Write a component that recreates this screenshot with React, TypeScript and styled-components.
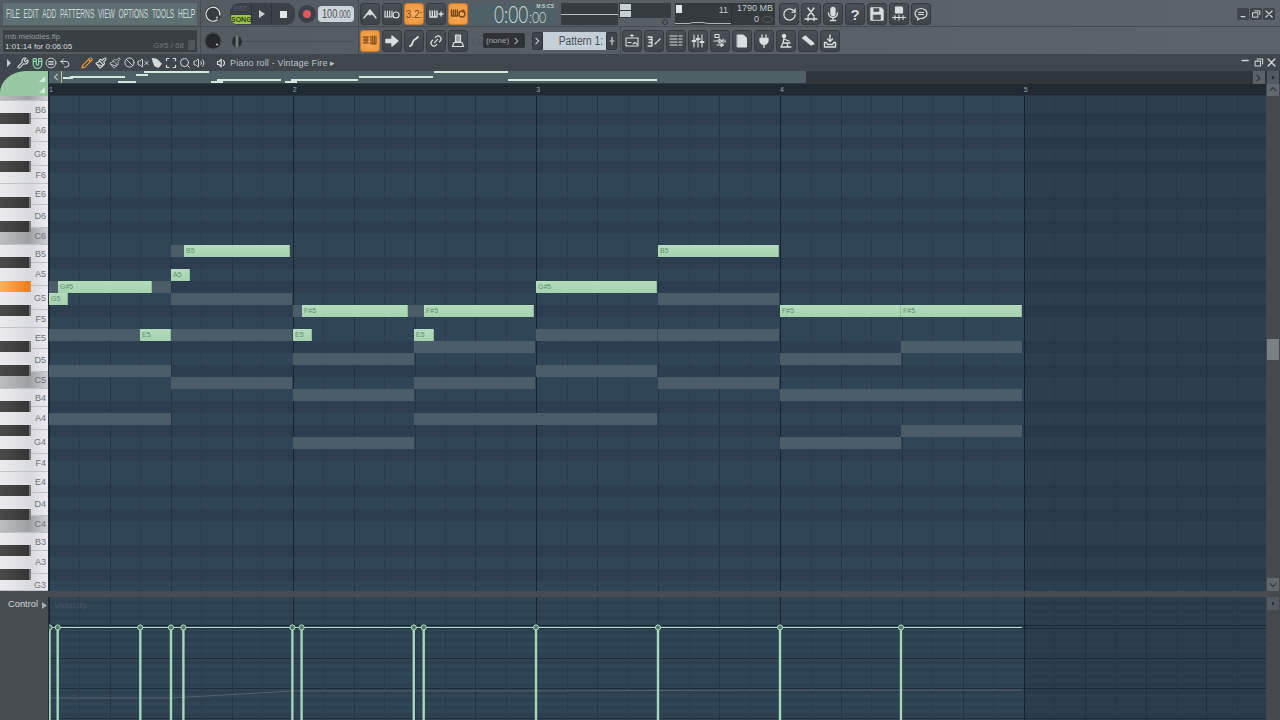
import React from 'react';
import styled, { createGlobalStyle, css } from 'styled-components';
import { RotateCw, Wrench, Magnet, Undo2, Pencil, Paintbrush, Ban, VolumeX, Search, Volume2, Link2 } from 'lucide-react';

const GlobalStyle = createGlobalStyle`
  html, body { margin: 0; padding: 0; background: #3f464c; }
  * { box-sizing: border-box; }
  #root { width: 1280px; height: 720px; overflow: hidden; font-family: "Liberation Sans", Arial, sans-serif; }
`;

const STEP = 30.46;
const BAR = STEP * 8;
const ROW = 12;

const verticalLines = css`
  repeating-linear-gradient(90deg, #17252f 0 1px, transparent 1px ${BAR}px),
  repeating-linear-gradient(90deg, #243543 0 1px, transparent 1px ${STEP * 2}px),
  repeating-linear-gradient(90deg, #2b3d4c 0 1px, transparent 1px ${STEP}px)
`;

const Page = styled.div`
  width: 1280px;
  height: 720px;
  display: flex;
  flex-direction: column;
  background: #3f464c;
  overflow: hidden;
`;

const Header = styled.header`
  height: 54px;
  background: linear-gradient(90deg, #545b60, #5c6369);
`;

const TopRow = styled.div<{ $line?: boolean }>`
  height: 27px;
  display: flex;
  align-items: flex-start;
  padding: 3px 0 0 3px;
  ${p => p.$line && 'border-bottom: 1px solid #474c51;'}
`;

const Menu = styled.nav`
  width: 194px;
  height: 22px;
  background: #5f7073;
  flex: none;
`;

const MenuInner = styled.div`
  width: 357px;
  height: 22px;
  margin-left: 3px;
  display: flex;
  justify-content: space-between;
  transform: scaleX(0.53);
  transform-origin: left center;
`;

const MenuItem = styled.span`
  font-size: 12.5px;
  line-height: 22px;
  color: #cbd8d8;
  white-space: nowrap;
`;

const Sep = styled.div<{ $ml: number }>`
  width: 1px;
  height: 27px;
  margin: -3px 0 0 ${p => p.$ml}px;
  background: #474c51;
  flex: none;
`;

const KnobWrap = styled.div`
  margin-left: 3px;
  width: 18px;
  height: 22px;
  flex: none;
  display: flex;
  align-items: center;
`;

const Transport = styled.div`
  margin-left: 8px;
  width: 65px;
  height: 22px;
  border-radius: 9px;
  background: #3b4146;
  display: flex;
  flex: none;
  overflow: hidden;
`;

const PatSong = styled.div`
  width: 22px;
  display: flex;
  flex-direction: column;
  align-items: center;
  border-right: 1px solid #2f3439;
`;

const PatLabel = styled.span`
  font-size: 7px;
  line-height: 12px;
  color: #596067;
`;

const SongLabel = styled.span`
  width: 20px;
  margin-left: 1px;
  height: 9px;
  background: #9cc24a;
  color: #2f4413;
  font-size: 7px;
  font-weight: bold;
  line-height: 9px;
  text-align: center;
  border-radius: 1px;
`;

const TransportKey = styled.div<{ $w: number }>`
  width: ${p => p.$w}px;
  display: flex;
  align-items: center;
  justify-content: center;
  border-right: 1px solid #2f3439;
  &:last-child { border-right: 0; }
`;

const RecordKey = styled.div`
  margin-left: 3px;
  width: 18px;
  height: 18px;
  margin-top: 2px;
  border-radius: 50%;
  background: #3b4146;
  display: flex;
  align-items: center;
  justify-content: center;
  flex: none;
  &::after {
    content: '';
    width: 8px;
    height: 8px;
    border-radius: 50%;
    background: #dc5a58;
  }
`;

const Tempo = styled.div`
  margin: 3px 0 0 2px;
  width: 36px;
  height: 16px;
  border-radius: 4px;
  background: #ccd4d9;
  padding-left: 4px;
  flex: none;
`;

const TempoText = styled.div`
  width: 44px;
  color: #4a5156;
  font-size: 13.5px;
  line-height: 16px;
  white-space: nowrap;
  transform: scaleX(0.68);
  transform-origin: left center;
  small { font-size: 10px; }
`;

const Group = styled.div<{ $ml: number }>`
  margin-left: ${p => p.$ml}px;
  display: flex;
  gap: 2px;
  flex: none;
`;

const ToolBtn = styled.div<{ $on?: boolean }>`
  width: 20px;
  height: 22px;
  border-radius: 3px;
  border: 1px solid ${p => (p.$on ? '#c77a2e' : '#363b40')};
  background: ${p => (p.$on ? 'radial-gradient(circle, #f8b061, #ee9232)' : 'linear-gradient(#494f54, #3e4449)')};
  color: ${p => (p.$on ? '#7a4613' : '#d9dee0')};
  display: flex;
  align-items: center;
  justify-content: center;
  font-size: 10px;
  flex: none;
  svg { display: block; }
`;

const TimePanel = styled.div`
  margin-left: 3px;
  width: 86px;
  height: 22px;
  background: #4e6166;
  position: relative;
  padding-left: 23px;
  flex: none;
`;

const TimeInner = styled.div`
  width: 76px;
  height: 20px;
  display: flex;
  align-items: flex-end;
  color: #cfdada;
  font-family: Lato, "Liberation Sans", sans-serif;
  font-weight: 300;
  transform: scaleX(0.75);
  transform-origin: left bottom;
`;

const TimeBig = styled.span`
  font-size: 23px;
  line-height: 18px;
`;

const TimeSmall = styled.span`
  font-size: 16.5px;
  line-height: 12px;
  margin-left: 1px;
`;

const TimeUnit = styled.span`
  position: absolute;
  top: 0;
  right: 3px;
  font-size: 5px;
  font-weight: 700;
  line-height: 6px;
  color: #c3cfcf;
`;

const DarkPanel = styled.div`
  margin-left: 4px;
  width: 57px;
  height: 22px;
  background: #373c41;
  display: flex;
  align-items: center;
  flex: none;
  &::after {
    content: '';
    display: block;
    width: 100%;
    height: 1px;
    background: #b9c0c4;
  }
`;

const MeterPanel = styled.div`
  margin-left: 1px;
  width: 52px;
  height: 22px;
  flex: none;
  display: flex;
  flex-direction: column;
  align-items: flex-end;
`;

const MeterBars = styled.div`
  width: 100%;
  height: 15px;
  background: #373c41;
  padding: 1px;
  display: flex;
  flex-direction: column;
  gap: 1px;
`;

const MeterBar = styled.div`
  width: 11px;
  height: 6px;
  background: #c9d0d4;
`;

const MeterDot = styled.div`
  width: 6px;
  height: 6px;
  margin: 1px 3px 0 0;
  border: 1px solid #30353a;
  border-radius: 50%;
`;

const CpuPanel = styled.div`
  margin-left: 4px;
  width: 100px;
  height: 22px;
  background: #353a3f;
  display: grid;
  grid-template-columns: 57px 43px;
  flex: none;
  color: #c5cbce;
  font-size: 9px;
`;

const CpuLeft = styled.div`
  position: relative;
  padding: 0 3px 0 0;
  text-align: right;
  line-height: 15px;
  border-right: 1px solid #2c3034;
`;

const CpuBlock = styled.div`
  position: absolute;
  left: 1px;
  top: 2px;
  width: 6px;
  height: 8px;
  background: #e2e6e8;
`;

const CpuWave = styled.svg`
  position: absolute;
  left: 0;
  bottom: 0;
`;

const CpuRight = styled.div`
  display: flex;
  flex-direction: column;
  align-items: flex-end;
  padding-right: 2px;
  line-height: 11px;
  white-space: nowrap;
`;

const CpuZero = styled.div`
  display: flex;
  align-items: center;
  gap: 3px;
  &::after {
    content: '';
    width: 9px;
    height: 5px;
    border: 1px solid #565c61;
    border-radius: 50%;
  }
`;

const WinBtns = styled.div`
  margin: 5px 5px 0 auto;
  display: flex;
  gap: 1px;
`;

const WinBtn = styled.div`
  width: 12px;
  height: 12px;
  border-radius: 2px;
  background: #3f454a;
  color: #d4d9db;
  display: flex;
  align-items: center;
  justify-content: center;
`;

const InfoPanel = styled.div`
  width: 194px;
  height: 22px;
  background: #3a3f44;
  padding: 2px 2px;
  position: relative;
  font-size: 7.8px;
  line-height: 9.5px;
  color: #989ea2;
  flex: none;
`;

const InfoTime = styled.div`
  color: #d8dcdf;
  font-size: 8px;
  line-height: 10px;
`;

const InfoNote = styled.span`
  position: absolute;
  right: 13px;
  bottom: 1px;
  color: #71777b;
  font-size: 8px;
  line-height: 10px;
`;

const InfoStamp = styled.span`
  position: absolute;
  right: 2px;
  bottom: 2px;
  width: 7px;
  height: 10px;
  background: #50565b;
  border-radius: 2px 2px 0 0;
`;

const SliderTrack = styled.div`
  margin: 0 0 0 6px;
  width: 126px;
  height: 22px;
  flex: none;
  display: flex;
  align-items: center;
  padding-left: 4px;
  &::after {
    content: '';
    flex: 1;
    height: 1px;
    background: #4a5055;
  }
`;

const SliderKnob = styled.div`
  width: 10px;
  height: 11px;
  border-radius: 50%;
  background: linear-gradient(90deg, #2c3034 30%, #8d9397 50%, #2c3034 70%);
`;

const FaintDot = styled.div`
  margin: 8px 0 0 4px;
  width: 8px;
  height: 8px;
  border-radius: 50%;
  border: 1px solid #4f555a;
  flex: none;
`;

const Dropdown = styled.div`
  margin: 3px 0 0 3px;
  width: 42px;
  height: 15px;
  background: #2f3337;
  border-radius: 2px;
  color: #a4a9ad;
  font-size: 8px;
  line-height: 15px;
  padding: 0 4px 0 3px;
  flex: none;
  display: flex;
  justify-content: space-between;
  align-items: center;
`;

const PatternArrow = styled.div<{ $ml?: number }>`
  margin: 2px 0 0 ${p => p.$ml ?? 0}px;
  width: 11px;
  height: 18px;
  background: #3e4449;
  border: 1px solid #33383d;
  border-radius: 2px;
  color: #c8cdd0;
  display: flex;
  align-items: center;
  justify-content: center;
  flex: none;
`;

const PatternName = styled.div`
  margin-top: 2px;
  width: 63px;
  height: 18px;
  background: #c4cfd7;
  flex: none;
  display: flex;
  justify-content: flex-end;
  padding-right: 3px;
`;

const PatternText = styled.span`
  color: #4a5258;
  font-size: 12px;
  line-height: 18px;
  white-space: nowrap;
  transform: scaleX(0.85);
  transform-origin: right center;
`;

const RollBar = styled.div`
  height: 17px;
  background: #3f464c;
  display: flex;
  align-items: center;
  color: #c6cbce;
  flex: none;
`;

const RollTool = styled.div<{ $ml?: number; $c?: string }>`
  width: 14px;
  margin-left: ${p => p.$ml ?? 0}px;
  display: flex;
  justify-content: center;
  color: ${p => p.$c ?? '#d5dadc'};
  flex: none;
`;

const RollTitle = styled.span`
  margin-left: 1px;
  font-size: 9px;
  letter-spacing: 0.15px;
  color: #bcc3c8;
`;

const RollWin = styled.div`
  margin: 0 3px 0 auto;
  display: flex;
  gap: 2px;
  color: #d2d6d9;
`;

const RollBody = styled.div`
  flex: 1;
  display: grid;
  grid-template-columns: 49px 1217px 14px;
  grid-template-rows: 13px 12px 495px 6px 123px;
`;

const Corner = styled.div`
  grid-column: 1;
  grid-row: 1 / 3;
  background: #98c8a2;
  border-top-left-radius: 26px 22px;
  position: relative;
  border-right: 1px solid #23303a;
`;

const CornerMark = styled.div<{ $top: number }>`
  position: absolute;
  right: 3px;
  top: ${p => p.$top}px;
  width: 0;
  height: 0;
  border-left: 6px solid transparent;
  border-bottom: 6px solid #d8eadb;
`;

const Overview = styled.div`
  grid-column: 2;
  grid-row: 1;
  background: #2f363c;
  position: relative;
`;

const OverviewActive = styled.div`
  width: 757px;
  height: 100%;
  background: #4e5f66;
  position: relative;
  border-bottom: 1px solid #333a40;
  display: flex;
  align-items: center;
  padding-left: 4px;
  color: #b8c0c4;
`;

const OverviewNote = styled.div`
  position: absolute;
  height: 2px;
  background: #d5e6de;
`;

const Playhead = styled.div`
  position: absolute;
  left: 12px;
  top: 0;
  bottom: 0;
  width: 1px;
  background: #c9c48a;
`;

const TopRight = styled.div`
  grid-column: 3;
  grid-row: 1;
  background: #2f363c;
  display: flex;
  justify-content: center;
  align-items: center;
`;

const OverviewEnd = styled.div`
  position: absolute;
  right: 1px;
  top: 0;
  width: 12px;
  height: 13px;
  background: #596066;
  color: #2f3439;
  display: flex;
  align-items: center;
  justify-content: center;
`;

const DotBtn = styled.div`
  width: 12px;
  height: 13px;
  background: #52595f;
  display: flex;
  align-items: center;
  justify-content: center;
  &::after { content: ''; width: 2px; height: 3px; background: #2b3034; }
`;

const Ruler = styled.div`
  grid-column: 2;
  grid-row: 2;
  background: #1f2a33;
  display: flex;
  border-bottom: 1px solid #253746;
`;

const RulerBar = styled.div`
  flex: 0 0 ${BAR}px;
  font-size: 7px;
  line-height: 12px;
  color: #9ca6ad;
`;

const ScrollBtn = styled.div<{ $h?: number }>`
  width: 12px;
  margin-left: 1px;
  height: ${p => p.$h ?? 13}px;
  background: #62686d;
  color: #31363a;
  display: flex;
  align-items: center;
  justify-content: center;
  flex: none;
`;

const RulerCap = styled.div`
  grid-column: 3;
  grid-row: 2;
  background: #45494d;
`;

const Keys = styled.div`
  grid-column: 1;
  grid-row: 3;
  position: relative;
  overflow: hidden;
  display: flex;
  flex-direction: column;
  border-right: 1px solid #1f2e38;
`;

const WhiteKey = styled.div<{ $h: number; $c?: boolean; $cut?: boolean }>`
  flex: 0 0 ${p => p.$h}px;
  border-bottom: 1px solid #bfc2c7;
  background: ${p => (p.$c ? 'linear-gradient(90deg, #bcbec1, #9ea0a3 60%, #cfd0d3)' : 'linear-gradient(90deg, #ececf0, #d8d9de 65%, #ebebef)')};
  color: #6f7377;
  font-size: 9px;
  line-height: 10px;
  display: flex;
  align-items: ${p => (p.$cut ? 'flex-end' : 'center')};
  justify-content: flex-end;
  padding-right: 2px;
`;

const BlackKey = styled.div<{ $hot?: boolean }>`
  position: absolute;
  left: 0;
  width: 31px;
  height: 11px;
  border-right: 2px solid ${p => (p.$hot ? '#ee8a2e' : '#77797b')};
  background: ${p => (p.$hot ? 'linear-gradient(90deg, #fcb25c, #f07c16)' : 'linear-gradient(90deg, #4a4a4a, #363636)')};
`;

const Grid = styled.div`
  grid-column: 2;
  grid-row: 3;
  position: relative;
  overflow: hidden;
  background-image: ${verticalLines},
    repeating-linear-gradient(180deg,
      #304556 0 17px, #2c3e4f 17px 29px,
      #304556 29px 41px, #2c3e4f 41px 53px,
      #304556 53px 65px, #2c3e4f 65px 77px,
      #304556 77px 101px, #2c3e4f 101px 113px,
      #304556 113px 125px, #2c3e4f 125px 137px,
      #304556 137px 144px);
`;

// dims the part of the roll after the last bar of the pattern
const PastEnd = styled.div`
  position: absolute;
  left: 975px;
  top: 0;
  right: 0;
  bottom: 0;
  background: rgba(20, 30, 42, 0.14);
`;

const Note = styled.div<{ $ghost?: boolean }>`
  position: absolute;
  height: 11.5px;
  font-size: 7px;
  line-height: 11px;
  padding-left: 2px;
  overflow: hidden;
  white-space: nowrap;
  ${p =>
    p.$ghost
      ? 'background: #4c5d6a;'
      : `background: linear-gradient(#b5dcbd, #a4d2ae);
         color: #5c9070;
         border-right: 1px solid #8fbd9b;`}
`;

const ScrollCol = styled.div`
  grid-column: 3;
  grid-row: 3;
  background: #45494d;
  display: flex;
  flex-direction: column;
  justify-content: flex-end;
  position: relative;
`;

const ScrollThumb = styled.div`
  position: absolute;
  left: 1px;
  top: 243px;
  width: 12px;
  height: 21px;
  background: #7b8084;
`;

const Splitter = styled.div`
  grid-column: 1 / 3;
  grid-row: 4;
  background: #464c51;
`;

const SplitCap = styled.div`
  grid-column: 3;
  grid-row: 4;
  background: #45494d;
`;

const ControlSide = styled.div`
  grid-column: 1;
  grid-row: 5;
  background: #474d51;
  border-right: 1px solid #1f2e38;
  padding: 2px 0 0 8px;
  display: flex;
  gap: 4px;
  align-items: flex-start;
`;

const ControlText = styled.span`
  color: #d3d7d9;
  font-size: 9.3px;
  line-height: 11px;
`;

const ControlArrow = styled.svg`
  margin-top: 3px;
  color: #a8aeb2;
`;

const VelPane = styled.div`
  grid-column: 2;
  grid-row: 5;
  position: relative;
  background-image: ${verticalLines},
    repeating-linear-gradient(180deg, #1d2c39 0 1px, transparent 1px 30px),
    repeating-linear-gradient(180deg, #304556 0 4px, #2d4050 4px 7.5px);
  background-position: 0 0, 0 0, 0 0, 0 31px, 0 0;
`;

const VelLabel = styled.span`
  position: absolute;
  left: 5px;
  top: 2px;
  font-size: 9.5px;
  line-height: 11px;
  color: #415362;
`;

const VelSvg = styled.svg`
  position: absolute;
  left: 0;
  top: 0;
`;

const VelCap = styled.div`
  grid-column: 3;
  grid-row: 5;
  background: #45494d;
`;

const Glyph: React.FC<{ size?: number; sw?: number; children: React.ReactNode }> = ({ size = 16, sw = 1.4, children }) => (
  <svg width={size} height={size} viewBox="0 0 16 16" fill="none" stroke="currentColor" strokeWidth={sw} strokeLinecap="round" strokeLinejoin="round">
    {children}
  </svg>
);

const Tri: React.FC<{ dir?: 'left' | 'right' | 'up' | 'down' }> = ({ dir = 'right' }) => {
  const d = {
    right: 'M2 1l4 4-4 4',
    left: 'M6 1 2 5l4 4',
    up: 'M1 6l4-4 4 4',
    down: 'M1 3l4 4 4-4',
  }[dir];
  return (
    <svg width="8" height="8" viewBox="0 0 10 10" fill="none" stroke="currentColor" strokeWidth="1.4">
      <path d={d} />
    </svg>
  );
};

const Knob: React.FC<{ dark?: boolean }> = ({ dark }) => (
  <svg width="18" height="18" viewBox="0 0 18 18">
    <circle cx="9" cy="9" r="8.4" fill={dark ? '#25292d' : '#373c41'} />
    {dark ? (
      <circle cx="9" cy="9" r="8" fill="none" stroke="#4d5358" strokeWidth="1" />
    ) : (
      <path d="M13.5 14.5A7 7 0 1 1 15.8 10.5" fill="none" stroke="#dfe4e6" strokeWidth="1.2" />
    )}
    <circle cx="13" cy="12.5" r="0.9" fill="#d7dcde" />
  </svg>
);

const row1Left = [
  <Glyph key="a"><path d="M2 12 8 4l6 8M8 4v5M4 9l4-2 4 2" /></Glyph>,
  <Glyph key="b" sw={1.2}><path d="M1 5v6h7V5M3.4 5v6M5.7 5v6" /><circle cx="12" cy="9" r="3" /></Glyph>,
  null,
  <Glyph key="d"><path d="M2 5v6h7V5M4.3 5v6M6.7 5v6M11 8h4M13 6v4" /></Glyph>,
  <Glyph key="e"><path d="M1.5 4v6h6V4M3.5 4v6M5.5 4v6" /><circle cx="12" cy="8" r="3" /><path d="m13 4 1 1-1 1" /></Glyph>,
];

const row1Right = [
  <RotateCw key="a" size={15} strokeWidth={2} />,
  <Glyph key="b"><path d="M5 2l6 8M11 2l-6 8M2 13h12M5 11.5v3M11 11.5v3" /></Glyph>,
  <Glyph key="c"><rect x="6" y="1.5" width="4" height="8" rx="2" fill="currentColor" /><path d="M3.5 7a4.5 4.5 0 0 0 9 0M8 11.5v3M5.5 14.5h5" /></Glyph>,
  <span key="d" style={{ fontSize: 15, fontWeight: 700 }}>?</span>,
  <Glyph key="e"><path d="M2 2h10l2 2v10H2z" fill="currentColor" /><path d="M5 2.5h5v3H5zM4.5 9h7v4.500h-7z" stroke="#4a5056" fill="#4a5056" strokeWidth="0.6" /></Glyph>,
  <Glyph key="f" sw={1.1}><path d="M4.500 1h6l1 1v5h-7z" fill="currentColor" /><path d="M1.500 11.500h13M4 9.500v4M8 9v5M12 9.500v4" /></Glyph>,
  <Glyph key="g" sw={1.2}><path d="M8 2.500c3.300 0 6 2.200 6 5s-2.700 5-6 5l-1 0-2.500 1.500.4-2.200C3 10.900 2 9.300 2 7.500c0-2.800 2.700-5 6-5z" /><path d="M5.500 6.500h5M5.500 8.500h5" /></Glyph>,
];

const row2Left = [
  <Glyph key="a" sw={1.1}><path d="M1 4h6M1 7h6M1 10h6M3 4v6M5 4v6" /><path d="M9 3v8h5V3M10.700 3v8M12.400 3v8" /></Glyph>,
  <Glyph key="b"><path d="M2 6.500h6V3l6 5-6 5V9.500H2z" fill="currentColor" /></Glyph>,
  <Glyph key="c" sw={1.8}><path d="M4 13c3 0 2-5 4-6s2-1 4-3" /></Glyph>,
  <Link2 key="d" size={14} strokeWidth={2} style={{ transform: 'rotate(-45deg)' }} />,
  <Glyph key="e" sw={1.2}><path d="M5.500 2h5v7h-5zM4 9.500h8l1.500 4h-11zM7 2v7M9 2v7" /></Glyph>,
];

const row2Right = [
  <Glyph key="a" sw={1.1}><path d="M2 5h12v8H2zM8 1.500v2M6.500 2.500h3M4 9.500h3M9 11l2-1.500 2 1.500" /></Glyph>,
  <Glyph key="b" sw={1.3}><path d="M2 4h4v2.500H3M6 6.500v3H3M6 9.500V13H2" /><path d="M9 11l2-2M12 8l2-2" /></Glyph>,
  <Glyph key="c" sw={1.1}><path d="M2 3h7M2 6h7M2 9h7M2 12h7M11 3h3M11 6h3M11 9h3M11 12h3" /></Glyph>,
  <Glyph key="d" sw={1.1}><path d="M4 2v12M8 2v12M12 2v12" /><path d="M2.500 8h3M6.500 6h3M10.500 9h3" strokeWidth="2" /></Glyph>,
  <Glyph key="e" sw={1.1}><path d="M3 1.500h4v3H3zM2 8h5M7 6v4l3-2zM11 6v4M13 7v2M5 12h4M9 10.500v3l2.500-1.500z" /></Glyph>,
  <Glyph key="f" sw={1}><path d="M3.500 2h6l3 3v9h-9z" fill="currentColor" /></Glyph>,
  <Glyph key="g" sw={1.3}><path d="M4 5.500h8v3l-2 2.500H6L4 8.500z" fill="currentColor" /><path d="M6 2v3.500M10 2v3.500M8 11v3.500" /></Glyph>,
  <Glyph key="h" sw={1.3}><circle cx="6" cy="3" r="1.600" fill="currentColor" /><path d="M6 5l-1 5h7M5 10l-2 4M9 10l1 4M3 14h10M6 6l5 2" /></Glyph>,
  <Glyph key="i" sw={1.2}><path d="M2.500 5l3-2 3 3 4 3 1.500 2-3 1-3.500-3z" fill="currentColor" /></Glyph>,
  <Glyph key="j" sw={1.4}><path d="M8 2v6M5.500 6 8 8.500 10.500 6M2.500 9.500h2l1 2h5l1-2h2V14h-11z" /></Glyph>,
];

const rollTools: { node: React.ReactNode; ml?: number; c?: string }[] = [
  { node: <Wrench size={12} strokeWidth={2.2} /> },
  { node: <Magnet size={13} strokeWidth={2.4} style={{ transform: 'rotate(135deg)' }} />, c: '#8ed2ab' },
  { node: <Glyph size={12} sw={1.2}><circle cx="8" cy="8" r="6.500" /><path d="M5 6h6M5 8h6M5 10h6" /></Glyph> },
  { node: <Undo2 size={12} strokeWidth={2} /> },
  { node: <Pencil size={12} strokeWidth={2.2} />, c: '#ee9f3f', ml: 8 },
  { node: <Paintbrush size={12} strokeWidth={2.2} /> },
  { node: <Paintbrush size={12} strokeWidth={1.6} /> },
  { node: <Ban size={11} strokeWidth={2} /> },
  { node: <VolumeX size={12} strokeWidth={2} /> },
  { node: <Glyph size={12} sw={1.2}><path d="M2 2l6 1 6 6-4 5-5-2-2-5z" fill="currentColor" /></Glyph> },
  { node: <Glyph size={12} sw={1.6}><path d="M2 5V2h3M11 2h3v3M14 11v3h-3M5 14H2v-3" /></Glyph> },
  { node: <Search size={12} strokeWidth={2} /> },
  { node: <Volume2 size={12} strokeWidth={2} /> },
];

const menuItems = ['FILE', 'EDIT', 'ADD', 'PATTERNS', 'VIEW', 'OPTIONS', 'TOOLS', 'HELP'];

// one octave of white keys, top key first: name, height, grey C key
const octave: [string, number, boolean][] = [
  ['B', 18, false], ['A', 23, false], ['G', 24, false], ['F', 18, false], ['E', 21, false], ['D', 23, false], ['C', 17, true],
];
const blackOffsets = [12, 36, 60, 96, 120];
const fullOctaves = [6, 5, 4];

const gridTop = (midi: number) => 149 + (71 - midi) * ROW;

const ghosts: [number, number, number][] = [
  [68, 49, 58], [68, 152, 171], [71, 171, 184], [66, 293, 302], [66, 408, 424],
  [67, 171, 292], [67, 658, 779],
  [64, 49, 140], [64, 171, 292], [64, 536, 657], [64, 658, 779],
  [63, 414, 535], [63, 901, 1022],
  [62, 293, 414], [62, 780, 901],
  [61, 49, 171], [61, 536, 657],
  [60, 171, 292], [60, 414, 535], [60, 658, 779],
  [59, 293, 414], [59, 780, 1022],
  [57, 49, 171], [57, 414, 657],
  [56, 901, 1022],
  [55, 293, 414], [55, 780, 901],
];

const notes: [string, number, number, number][] = [
  ['G#5', 68, 58, 152], ['G5', 67, 49, 68], ['E5', 64, 140, 171], ['A5', 69, 171, 190], ['B5', 71, 184, 290],
  ['F#5', 66, 302, 408], ['E5', 64, 293, 312], ['F#5', 66, 424, 534], ['E5', 64, 414, 434],
  ['G#5', 68, 536, 657], ['B5', 71, 658, 779], ['F#5', 66, 780, 901], ['F#5', 66, 901, 1022],
];

const overviewNotes: [number, number, number][] = [
  [63, 73, 77], [70, 125, 76], [118, 136, 81], [136, 148, 74], [144, 209, 71], [211, 223, 81], [217, 281, 79],
  [285, 297, 81], [291, 358, 79], [359, 433, 76], [434, 508, 71], [508, 657, 79],
];

const velX = [0.5, 8.7, 91.3, 122, 134.4, 243.4, 252.6, 364.8, 374.7, 487, 609, 731, 852];

export default function App() {
  return (
    <Page>
      <GlobalStyle />
      <Header>
        <TopRow $line>
          <Menu>
            <MenuInner>
              {menuItems.map(m => (
                <MenuItem key={m}>{m}</MenuItem>
              ))}
            </MenuInner>
          </Menu>
          <Sep $ml={3} />
          <KnobWrap><Knob /></KnobWrap>
          <Transport>
            <PatSong>
              <PatLabel>PAT</PatLabel>
              <SongLabel>SONG</SongLabel>
            </PatSong>
            <TransportKey $w={20}>
              <svg width="8" height="10" viewBox="0 0 8 10"><path d="M1 1l6 4-6 4z" fill="#c9cfd2" /></svg>
            </TransportKey>
            <TransportKey $w={23}>
              <svg width="7" height="7" viewBox="0 0 7 7"><rect width="7" height="7" fill="#e2e6e8" /></svg>
            </TransportKey>
          </Transport>
          <RecordKey />
          <Tempo><TempoText>100<small>.000</small></TempoText></Tempo>
          <Sep $ml={4} />
          <Group $ml={1}>
            {row1Left.map((icon, i) => (
              <ToolBtn key={i} $on={i === 2 || i === 4}>{icon ?? '3.2:'}</ToolBtn>
            ))}
          </Group>
          <TimePanel>
            <TimeInner>
              <TimeBig>0:00</TimeBig>
              <TimeSmall>:00</TimeSmall>
            </TimeInner>
            <TimeUnit>M:S:CS</TimeUnit>
          </TimePanel>
          <DarkPanel />
          <MeterPanel>
            <MeterBars><MeterBar /><MeterBar /></MeterBars>
            <MeterDot />
          </MeterPanel>
          <CpuPanel>
            <CpuLeft>
              <CpuBlock />
              11
              <CpuWave width="56" height="6" viewBox="0 0 56 6">
                <path d="M0 4.500h14l4-1h10l5 1h23" fill="none" stroke="#cbd1d4" strokeWidth="0.8" />
              </CpuWave>
            </CpuLeft>
            <CpuRight>
              <span>1790 MB</span>
              <CpuZero>0</CpuZero>
            </CpuRight>
          </CpuPanel>
          <Group $ml={4}>
            {row1Right.map((icon, i) => (
              <ToolBtn key={i}>{icon}</ToolBtn>
            ))}
          </Group>
          <WinBtns>
            <WinBtn><Glyph size={10} sw={2}><path d="M5 12h6" /></Glyph></WinBtn>
            <WinBtn><Glyph size={10} sw={1.6}><path d="M3 6h8v7H3zM6 3h8v6" /></Glyph></WinBtn>
            <WinBtn><Glyph size={10} sw={2}><path d="M3 3l10 10M13 3L3 13" /></Glyph></WinBtn>
          </WinBtns>
        </TopRow>
        <TopRow>
          <InfoPanel>
            rnb melodies.flp
            <InfoTime>1:01:14 for 0:06:05</InfoTime>
            <InfoNote>G#5 / 68</InfoNote>
            <InfoStamp />
          </InfoPanel>
          <Sep $ml={3} />
          <KnobWrap><Knob dark /></KnobWrap>
          <SliderTrack><SliderKnob /></SliderTrack>
          <Sep $ml={4} />
          <Group $ml={1}>
            {row2Left.map((icon, i) => (
              <ToolBtn key={i} $on={i === 0}>{icon}</ToolBtn>
            ))}
          </Group>
          <FaintDot />
          <Dropdown>(none)<Tri /></Dropdown>
          <PatternArrow $ml={7}><Tri /></PatternArrow>
          <PatternName><PatternText>Pattern 1:</PatternText></PatternName>
          <PatternArrow>
            <svg width="6" height="8" viewBox="0 0 6 8" fill="none" stroke="currentColor" strokeWidth="1.2"><path d="M3 0v8M0.500 4h5" /></svg>
          </PatternArrow>
          <Sep $ml={3} />
          <Group $ml={1}>
            {row2Right.map((icon, i) => (
              <ToolBtn key={i}>{icon}</ToolBtn>
            ))}
          </Group>
        </TopRow>
      </Header>

      <RollBar>
        <RollTool $ml={2} $c="#c5cacd">
          <svg width="6" height="8" viewBox="0 0 6 8"><path d="M1 0l4 4-4 4z" fill="currentColor" /></svg>
        </RollTool>
        {rollTools.map((t, i) => (
          <RollTool key={i} $ml={t.ml} $c={t.c}>{t.node}</RollTool>
        ))}
        <RollTool $ml={9}>
          <Glyph size={12} sw={1.6}><path d="M7 3 4 6H2v4h2l3 3zM10 5a4 4 0 0 1 0 6" /></Glyph>
        </RollTool>
        <RollTitle>Piano roll - Vintage Fire ▸</RollTitle>
        <RollWin>
          <Glyph size={11} sw={2}><path d="M3 5h9" /></Glyph>
          <Glyph size={11} sw={1.5}><path d="M3 6h8v7H3zM6 3h8v7" /></Glyph>
          <Glyph size={11} sw={2}><path d="M3 3l10 10M13 3L3 13" /></Glyph>
        </RollWin>
      </RollBar>

      <RollBody>
        <Corner>
          <CornerMark $top={5} />
          <CornerMark $top={16} />
        </Corner>
        <Overview>
          <OverviewActive>
            <Tri dir="left" />
            <Playhead />
            {overviewNotes.map(([a, b, y], i) => (
              <OverviewNote key={i} style={{ left: a - 49, width: b - a, top: y - 71 }} />
            ))}
          </OverviewActive>
          <OverviewEnd><Tri /></OverviewEnd>
        </Overview>
        <TopRight><DotBtn /></TopRight>
        <Ruler>
          {[1, 2, 3, 4, 5].map(n => (
            <RulerBar key={n}>{n}</RulerBar>
          ))}
        </Ruler>
        <RulerCap><ScrollBtn $h={12}><Tri dir="up" /></ScrollBtn></RulerCap>
        <Keys>
          <WhiteKey $h={5} $c />
          {fullOctaves.flatMap(o =>
            octave.map(([name, h, c]) => (
              <WhiteKey key={name + o} $h={h} $c={c}>{name}{o}</WhiteKey>
            )),
          )}
          <WhiteKey $h={18}>B3</WhiteKey>
          <WhiteKey $h={23}>A3</WhiteKey>
          <WhiteKey $h={17} $cut>G3</WhiteKey>
          {[0, 1, 2, 3].flatMap(oi =>
            blackOffsets.map(off => {
              const top = 5 + oi * 144 + off;
              return top < 495 ? <BlackKey key={top} $hot={top === 185} style={{ top }} /> : null;
            }),
          )}
        </Keys>
        <Grid>
          {ghosts.map(([midi, a, b], i) => (
            <Note key={i} $ghost style={{ top: gridTop(midi), left: a - 49, width: b - a }} />
          ))}
          {notes.map(([label, midi, a, b], i) => (
            <Note key={i} style={{ top: gridTop(midi), left: a - 49, width: b - a }}>{label}</Note>
          ))}
          <PastEnd />
        </Grid>
        <ScrollCol>
          <ScrollThumb />
          <ScrollBtn><Tri dir="down" /></ScrollBtn>
        </ScrollCol>
        <Splitter />
        <SplitCap />
        <ControlSide>
          <ControlText>Control</ControlText>
          <ControlArrow width="5" height="7" viewBox="0 0 5 7"><path d="M0 0l5 3.500L0 7z" fill="currentColor" /></ControlArrow>
        </ControlSide>
        <VelPane>
          <VelLabel>Velocity</VelLabel>
          <VelSvg width="1217" height="123" viewBox="0 0 1217 123">
            <path d="M0 101 L122 101 L244 94 L487 94 L731 93 L973 93" fill="none" stroke="#52636f" strokeWidth="1" />
            <path d="M0 30.500H973" stroke="#bfe3cd" strokeWidth="1.2" />
            {velX.map(x => (
              <g key={x}>
                <rect x={x - 1.2} y={31} width={2.4} height={92} fill="#a6d8b8" />
                <circle cx={x} cy={30.5} r={2.6} fill="#557a6b" stroke="#b4e0c6" strokeWidth={1} />
              </g>
            ))}
          </VelSvg>
          <PastEnd />
        </VelPane>
        <VelCap><ScrollBtn><DotBtn /></ScrollBtn></VelCap>
      </RollBody>
    </Page>
  );
}
